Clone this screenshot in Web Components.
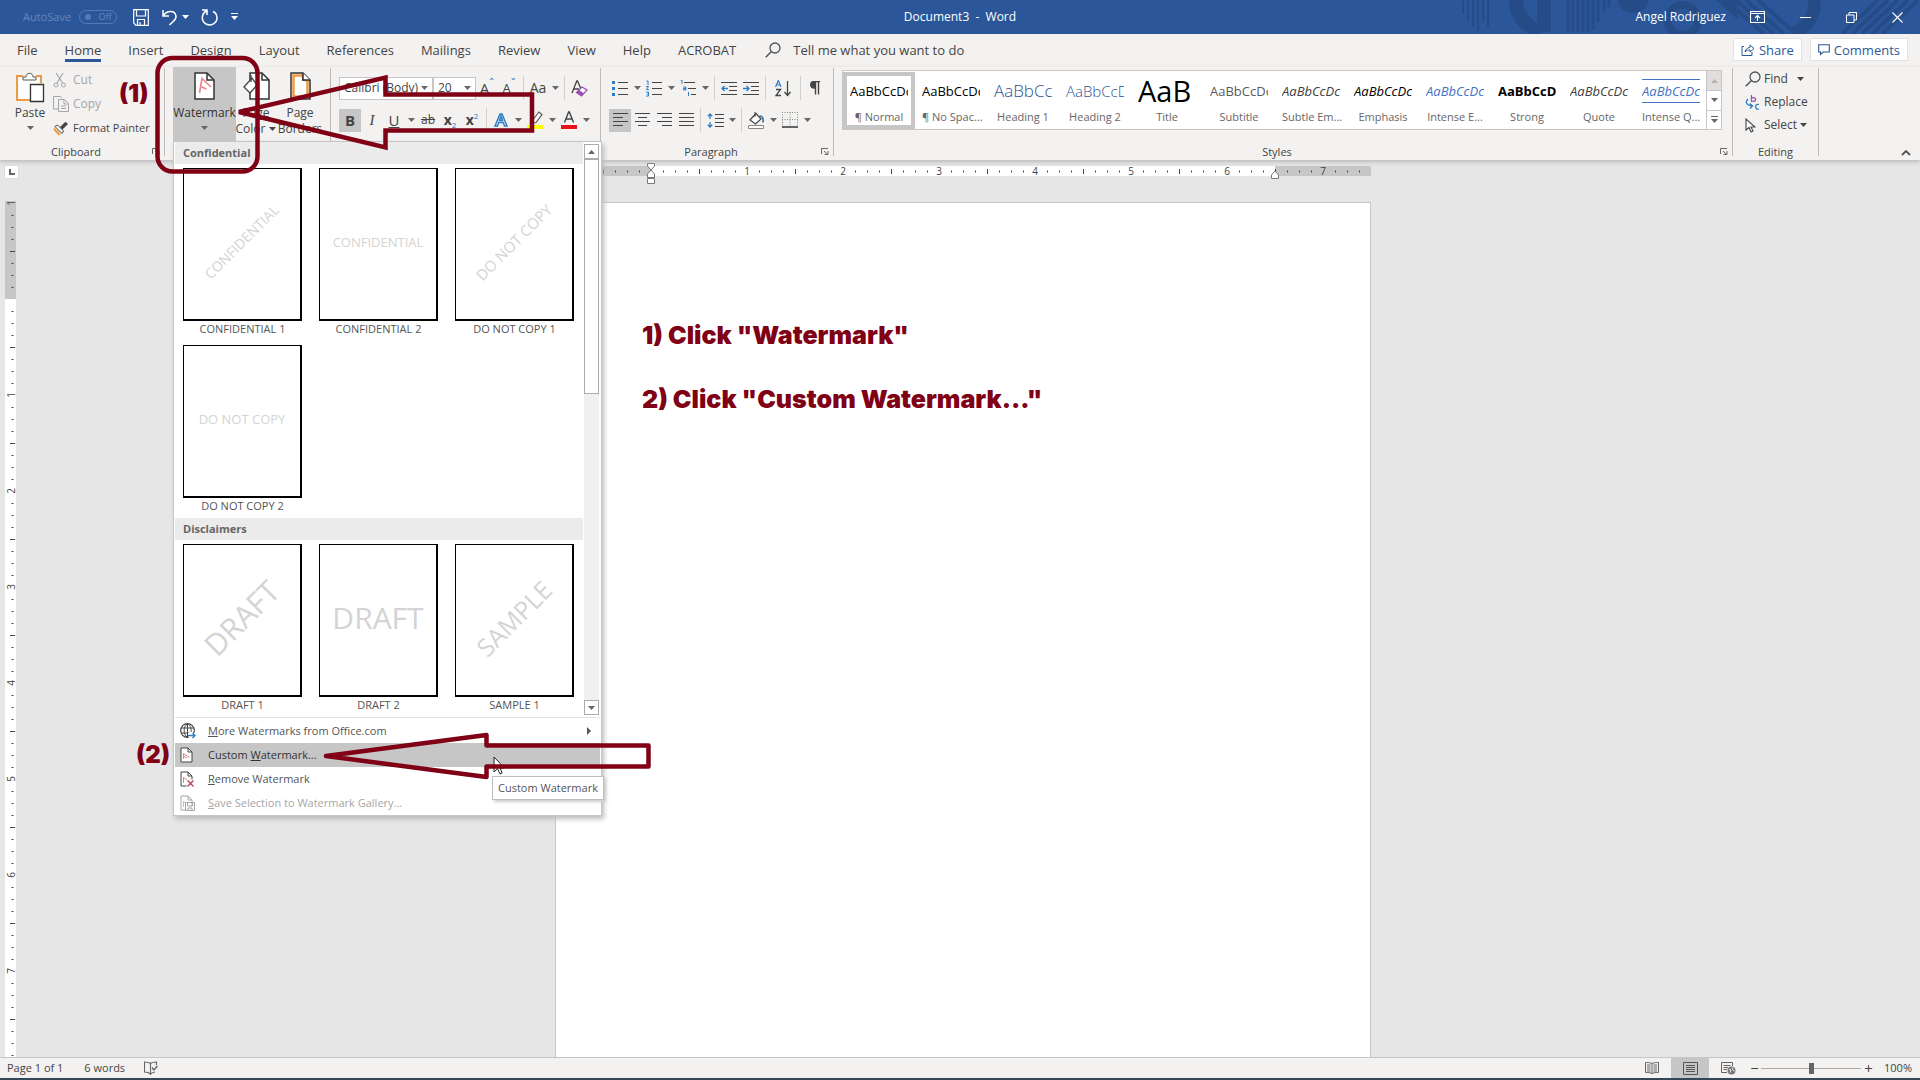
<!DOCTYPE html>
<html lang="en">
<head>
<meta charset="utf-8">
<title>Document3 - Word</title>
<style>
html,body{margin:0;height:100%}
body{font:12px/16px "Open Sans","Noto Sans",sans-serif;color:#444;overflow:hidden}
</style>
</head>
<body>
<word-app></word-app>
<script>
const BASE = `
*{box-sizing:border-box}
button,input,select{font:inherit;color:inherit;margin:0}
button{background:none;border:0;padding:0;display:flex;align-items:center;justify-content:center;white-space:nowrap}
svg{display:block}
`;
function define(name, html, setup) {
  const tpl = document.createElement('template');
  customElements.define(name, class extends HTMLElement {
    connectedCallback() {
      if (this.shadowRoot) return;
      const root = this.attachShadow({ mode: 'open' });
      tpl.innerHTML = `<style>${BASE}</style>` + (typeof html === 'function' ? html(this) : html);
      root.append(tpl.content.cloneNode(true));
      if (setup) setup(this, root);
    }
  });
}

/* ---------- icons: name -> [width, height, body] ---------- */
const L = (y, a, b, c = '#444') => `<path d="M${a} ${y}H${b}" stroke="${c}" fill="none"/>`;
const page = '<path d="M1 1H13L20 8V27H1Z" fill="#fff" stroke="#333" stroke-width="1.5"/><path d="M13 1V8H20" fill="none" stroke="#333" stroke-width="1.5"/>';
const small = c => `<path d="M1 1H8L12 5V15H1Z" fill="#fff" stroke="${c}"/><path d="M8 1V5H12" fill="none" stroke="${c}"/>`;
const ICONS = {
  caret: [7, 4, '<path d="M0 0H7L3.5 4Z" fill="currentColor"/>'],
  up: [7, 4, '<path d="M0 4H7L3.5 0Z" fill="currentColor"/>'],
  right: [4, 8, '<path d="M0 0V8L4 4Z" fill="currentColor"/>'],
  more: [7, 8, '<path d="M0 .5H7" stroke="currentColor"/><path d="M0 3H7L3.5 7Z" fill="currentColor"/>'],
  save: [16, 17, '<path d="M.7 .7H15.3V16.3H3L.7 14Z M3.5 1V7H12.5V1 M4.5 16V10.500H11.5V16 M7 16V13" fill="none" stroke="#fff" stroke-width="1.2"/>'],
  undo: [16, 17, '<path d="M1 1V7H7 M1.500 6.500C5 1 13 1 14 7C14.500 11 10 13 7.500 16" fill="none" stroke="#fff" stroke-width="1.5"/>'],
  redo: [17, 17, '<path d="M1 1H6V6 M5.500 2C0 5 0 12 5 15C10 17.500 16 14 16 9C16 6 14.500 3.500 12 2.500" fill="none" stroke="#fff" stroke-width="1.5"/>'],
  display: [15, 12, '<path d="M.5 .5H14.500V11.500H.5Z M.5 2.500H14.500 M7.500 10V4.500 M5 7L7.500 4.500L10 7" fill="none" stroke="#fff" stroke-width="1.1"/>'],
  min: [11, 11, '<path d="M0 5.500H11" stroke="#fff"/>'],
  restore: [11, 11, '<path d="M.5 3H8V10.500H.5Z M3 3V.5H10.500V8H8" fill="none" stroke="#fff"/>'],
  close: [11, 11, '<path d="M.5 .5L10.500 10.500M10.500 .5L.5 10.500" stroke="#fff" stroke-width="1.1"/>'],
  search: [16, 16, '<circle cx="10" cy="6" r="5" fill="none" stroke="#555" stroke-width="1.3"/><path d="M6.500 9.500L.7 15.300" stroke="#555" stroke-width="1.5"/>'],
  share: [14, 13, '<path d="M3 3.500H1V12.500H11V9" fill="none" stroke="#2b579a"/><path d="M4 9C4.500 6 6.500 4.700 9 4.500V2L13 5.500L9 9V7C7 7 5.500 7.500 4 9Z" fill="none" stroke="#2b579a"/>'],
  comment: [12, 12, '<path d="M.7 .7H11.300V8H5L2.500 10.500V8H.7Z" fill="none" stroke="#2b579a" stroke-width="1.1"/>'],
  paste: [29, 31, '<path d="M7 4H1V28H14 M20 4H25V11" fill="none" stroke="#eb9b48" stroke-width="2"/><path d="M2.500 6V26.500H13V12H23V6Z" fill="#fff"/><path d="M7 8V5H10C10 0 17 0 17 5H20V8Z" fill="#fff" stroke="#555"/><path d="M14.500 12.500H27.500V29.500H14.500Z" fill="#fff" stroke="#333" stroke-width="1.3"/>'],
  cut: [14, 16, '<path d="M3 1L9.500 11M10 1L4 11" stroke="#a6a6a6" fill="none" stroke-width="1.2"/><circle cx="3" cy="13" r="2" fill="none" stroke="#a6a6a6"/><circle cx="10.500" cy="13" r="2" fill="none" stroke="#a6a6a6"/>'],
  copy: [16, 16, '<path d="M5 13H.5V.5H7.500L9 2" fill="none" stroke="#a6a6a6"/><path d="M5.500 3.500H11.500L15.500 7.500V15.500H5.500Z M11 4V8H15 M8 10H13M8 12.500H13" fill="none" stroke="#a6a6a6"/>'],
  painter: [16, 15, '<path d="M1 6L8 13L5.500 14.500L.5 9Z" fill="#f0a04b"/><path d="M2 5.500L4.500 4L10.500 10L9 12.500Z" fill="#fff" stroke="#444"/><path d="M7 6L12.500 .8L15 3L9.500 8.500Z" fill="#444"/>'],
  watermark: [21, 28, page + '<path d="M5.500 22L8 7.500L17 16M6.500 15.500L12.500 18" transform="translate(0 -1)" fill="none" stroke="#f0868e" stroke-width="1.7"/>'],
  pagecolor: [27, 28, '<g transform="translate(6)">' + page + '</g><path d="M1 15L9 6L14 13L7 21Z" fill="#fff" stroke="#444" stroke-width="1.3"/><path d="M8 3V10M13 14C16 15 16 18 15 20" fill="none" stroke="#444" stroke-width="1.300"/>'],
  pageborders: [21, 28, page + '<path d="M3.500 3.500H11.500L17.500 9.500V24.500H3.500Z" fill="none" stroke="#eb9b48" stroke-width="2.500"/><path d="M13 1V8H20" fill="#fff" stroke="#333" stroke-width="1.500"/>'],
  clear: [17, 17, '<path d="M1 13L5.800 1H6.500L10 9M3 9H8" fill="none" stroke="#444" stroke-width="1.300"/><path d="M5.500 12.500L11 7L16 10L10.500 16Z" fill="#fff" stroke="#9b4fb5" stroke-width="1.300"/><path d="M5.500 12.500L8 10L13 13.500L10.500 16Z" fill="#9b4fb5"/>'],
  texteffect: [14, 14, '<path d="M1 13L6 1H8L13 13H10.500L9.300 9.500H4.700L3.500 13Z M5.500 7.500H8.500L7 3.300Z" fill="#fff" stroke="#2e7cc4" stroke-width="1.500"/>'],
  highlight: [16, 18, '<path d="M0 14H16V18H0Z" fill="#ffff00"/><path d="M5 10L12 1L15 3.500L9 11.500L5 12Z" fill="#fff" stroke="#555" stroke-width="1.200"/><path d="M2 12.500L5 10L7 12Z" fill="#666"/>'],
  fontcolor: [16, 18, '<path d="M0 14H16V18H0Z" fill="#e8121b"/><path d="M3.500 11.500L7.600 1H8.400L12.500 11.500M5 8H11" fill="none" stroke="#444" stroke-width="1.400"/>'],
  bullets: [16, 17, '<path d="M0 1H3V4H0ZM0 7H3V10H0ZM0 13H3V16H0Z" fill="#2e7cc4"/>' + L(2.5, 6, 16) + L(8.5, 6, 16) + L(14.5, 6, 16)],
  numbering: [16, 17, '<path d="M.5 1H2V5M0 6.500H2.500L.5 9.500H3M0 12H2.500V16H0M1 14H2.500" fill="none" stroke="#2e7cc4"/>' + L(2.5, 6, 16) + L(8.5, 6, 16) + L(14.5, 6, 16)],
  multi: [16, 17, '<path d="M.5 0H2V4M3 7H6V10H3.500V8.500H6M8.500 12V16" fill="none" stroke="#2e7cc4"/>' + L(2.5, 4, 15) + L(8.5, 8, 16) + L(14.5, 11, 16)],
  outdent: [16, 15, L(1.5, 0, 16) + L(5.5, 8, 16) + L(9.5, 8, 16) + L(13.5, 0, 16) + '<path d="M7 7.500H1M3.500 5L1 7.500L3.500 10" fill="none" stroke="#2e7cc4" stroke-width="1.300"/>'],
  indent: [16, 15, L(1.5, 0, 16) + L(5.5, 8, 16) + L(9.5, 8, 16) + L(13.5, 0, 16) + '<path d="M0 7.500H6M3.500 5L6 7.500L3.500 10" fill="none" stroke="#2e7cc4" stroke-width="1.300"/>'],
  sort: [17, 17, '<path d="M.5 7L3.300 .5L6 7M1.500 5H5" fill="none" stroke="#2e7cc4" stroke-width="1.200"/><path d="M1 9.500H5.500L1 15.500H6M12.500 1V15M9.500 12L12.500 15.500L15.500 12" fill="none" stroke="#444" stroke-width="1.300"/>'],
  pilcrow: [10, 14, '<path d="M10 .5H4.500C-.5 .5 -.5 7 4.500 7V1M5.500 .5V13.500M8.500 .5V13.500" fill="none" stroke="#444" stroke-width="1.400"/><path d="M5 .5C-.5 .5 -.5 7 5 7Z" fill="#444"/>'],
  left: [15, 14, L(.5, 0, 15) + L(4.5, 0, 10) + L(8.5, 0, 15) + L(12.5, 0, 10)],
  center: [15, 14, L(.5, 0, 15) + L(4.5, 3, 12) + L(8.5, 0, 15) + L(12.5, 3, 12)],
  rightal: [15, 14, L(.5, 0, 15) + L(4.5, 5, 15) + L(8.5, 0, 15) + L(12.5, 5, 15)],
  justify: [15, 14, L(.5, 0, 15) + L(4.5, 0, 15) + L(8.5, 0, 15) + L(12.5, 0, 15)],
  spacing: [17, 15, '<path d="M3 1V6M.8 3.300L3 1L5.200 3.300M3 9V14M.8 11.700L3 14L5.200 11.700" fill="none" stroke="#2e7cc4" stroke-width="1.300"/>' + L(1.5, 8, 17) + L(5.5, 8, 17) + L(9.5, 8, 17) + L(13.5, 8, 17)],
  shading: [17, 17, '<path d="M.5 13.500H15.500V16.500H.5Z" fill="#fff" stroke="#888"/><path d="M2 8L8 1.500L13 7L7.500 12Z" fill="#fff" stroke="#444" stroke-width="1.200"/><path d="M7 0V5" stroke="#444"/><path d="M11.500 4C15 4 15.500 7 15 10.500" fill="none" stroke="#2e6aa0" stroke-width="1.600"/>'],
  borders: [16, 16, '<path d="M.5 0V14M15.500 0V14M8 0V14M0 .5H16M0 7.500H16" fill="none" stroke="#888" stroke-dasharray="1 1.500"/><path d="M0 15H16" stroke="#333" stroke-width="1.500"/>'],
  launcher: [8, 7, '<path d="M.5 6V.5H7 M3 3L6.500 6.300M7 3V6.500H3.500" fill="none" stroke="#666"/>'],
  replace: [15, 17, '<path d="M6.500 1V8M6.500 4C12 2 12 9 6.500 7" fill="none" stroke="#9b4fb5" stroke-width="1.300"/><path d="M14 10.500C9.500 9 9.500 16.500 14 15M3 5C0 8 1 11 7 12M5 9.500L7.500 12L5 14.500" fill="none" stroke="#2e7cc4" stroke-width="1.300"/>'],
  select: [11, 15, '<path d="M1 1V12L4 9.500L6 14L8 13L6 9H10Z" fill="#fff" stroke="#444" stroke-width="1.100"/>'],
  collapse: [10, 6, '<path d="M1 5L5 1L9 5" fill="none" stroke="#555" stroke-width="1.800"/>'],
  globe: [16, 16, '<circle cx="7.500" cy="7.500" r="6.800" fill="none" stroke="#444" stroke-width="1.200"/><path d="M7.500 .7V14M1 5H14M1 10H9M7.500 .7C3 4 3 11 7.500 14.500M7.500 .7C11 3 11.500 6 11 9" fill="none" stroke="#444"/><path d="M8 10H16V16H9Z" fill="#fff"/><path d="M8 12.500H15M12.500 10L15 12.500L12.500 15" fill="none" stroke="#2e7cc4" stroke-width="1.300"/>'],
  custom: [13, 16, small('#444') + '<path d="M3.500 12V6.500L9.500 10.500M4 9.500L7 11" fill="none" stroke="#e8808a"/>'],
  remove: [15, 16, small('#444') + '<path d="M3.500 12V6.500L7 9" fill="none" stroke="#e8808a"/><path d="M6.500 8.500H15V16H6.500Z" fill="#fff"/><path d="M7.500 9.500L13.500 15.500M13.500 9.500L7.500 15.500" stroke="#b5404c" stroke-width="1.300"/>'],
  savesel: [15, 16, small('#a6a6a6') + '<path d="M3.500 12V6.500L7 9" fill="none" stroke="#bbb"/><path d="M5.500 7.500H14.500V15.500H5.500Z M7.500 8V11H12.500V8M8 15V13H12V15" fill="#fff" stroke="#a6a6a6"/>'],
  proof: [14, 14, '<path d="M6.500 2.500C5 1 2 1 .5 1V11C3 11 5 11.500 6.500 13M6.500 2.500C8 1 10 1 12.500 1V4M6.500 2.500V13C7.500 12 9 11.500 11 11" fill="none" stroke="#666" stroke-width="1.100"/><path d="M8 6.500L10 9L13.500 5" fill="none" stroke="#666" stroke-width="1.400"/>'],
  read: [14, 12, '<path d="M7 1.500C5 .5 2 .5 .5 .5V10.500C3 10.500 5 10.500 7 11.500C9 10.500 11 10.500 13.500 10.500V.5C11 .5 9 .5 7 1.500ZM7 1V12M2 3H5.500M2 5H5.500M2 7H5.500M2 9H5.500M8.500 3H12M8.500 5H12M8.500 7H12M8.500 9H12" fill="none" stroke="#666"/>'],
  print: [15, 13, '<path d="M.5 .5H14.500V12.500H.5ZM3 3.500H12M3 5.500H12M3 7.500H12M3 9.500H12" fill="none" stroke="#555"/>'],
  web: [15, 13, '<path d="M6 10.500H.5V.5H11.500V4M2.500 3.500H9.500M2.500 5.500H7M2.500 7.500H6" fill="none" stroke="#666"/><circle cx="10.500" cy="8.500" r="4" fill="#777"/><path d="M8 7L10 8L9 10.500M12 5.500L11.500 7.500L13.500 9" fill="none" stroke="#f3f2f1"/>'],
  cursor: [12, 19, '<path d="M1 1V16L4.500 12.700L7 18L9.200 17L7 12H11.500Z" fill="#fff" stroke="#222"/>']
};
define('ui-icon', el => {
  const [w, h, body] = ICONS[el.getAttribute('name')];
  return `<style>:host{display:block;flex:none}</style><svg width="${w}" height="${h}" viewBox="0 0 ${w} ${h}" aria-hidden="true">${body}</svg>`;
});

/* ---------- title bar ---------- */
define('title-bar', `
<style>
:host{display:grid;grid-template-columns:1fr auto 1fr;align-items:center;height:34px;background:#2b579a;color:#fff;position:relative;flex:none}
.art{position:absolute;right:0;top:0}
.l,.r,.win{display:flex;align-items:center;position:relative}
.l{padding-left:23px}
.r{justify-content:flex-end;padding-right:17px;gap:24px}
.win{gap:35px}
.auto{display:flex;gap:8px;color:#6386bd;align-items:center;margin-right:15px;font-size:11px;width:95px}
.tog{width:38px;height:14px;border:1px solid #5479b4;border-radius:7px;display:flex;align-items:center;gap:8px;padding:0 4px;font-size:9px;color:#6386bd}
.tog i{width:6px;height:6px;border-radius:3px;background:#5479b4}
.l>button{margin-right:13px}
.l .c{margin:0 12px 0 -9px}
</style>
<svg class="art" width="462" height="34" viewBox="0 0 462 34" aria-hidden="true"><g fill="none" stroke="#264c88">
<path d="M5 0V14M10 0V20M15 0V26M20 0V32M25 0V22M30 0V28" stroke-width="2"/>
<path d="M58 0C58 16 66 24 84 34" stroke-width="14"/><path d="M86 0V32" stroke-width="14"/>
<path d="M110 0V32M115 0V32M120 0V32M125 0V32M130 0V32M135 0V30M140 0V22M146 0V12M151 0V7" stroke-width="3"/>
<circle cx="225" cy="20" r="15" stroke-width="8"/>
<path d="M268 0L306 34M278 0L316 34M288 0L326 34M300 0L338 34" stroke-width="4"/>
<path d="M356 0C358 14 350 26 336 34" stroke-width="13"/>
<path d="M384 34L420 0M394 34L430 0M404 34L440 0M414 34L450 0M424 34L460 0" stroke-width="4"/></g>
<path d="M160 0H190C190 17 160 17 160 0ZM258 0H280V20Z" fill="#264c88"/></svg>
<div class="l"><label class="auto">AutoSave <button class="tog" disabled><i></i>Off</button></label>
<button aria-label="Save"><ui-icon name="save"></ui-icon></button><button aria-label="Undo"><ui-icon name="undo"></ui-icon></button><button class="c" aria-label="Undo list"><ui-icon name="caret"></ui-icon></button><button aria-label="Redo"><ui-icon name="redo"></ui-icon></button><button aria-label="Customize"><ui-icon name="more"></ui-icon></button></div>
<span>Document3&nbsp; -&nbsp; Word</span>
<div class="r"><span>Angel Rodriguez</span><div class="win"><button aria-label="Ribbon display"><ui-icon name="display"></ui-icon></button><button aria-label="Minimize"><ui-icon name="min"></ui-icon></button><button aria-label="Restore"><ui-icon name="restore"></ui-icon></button><button aria-label="Close"><ui-icon name="close"></ui-icon></button></div></div>`);

/* ---------- tab row ---------- */
define('tab-row', `
<style>
:host{display:flex;height:33px;background:#f3f2f1;font-size:13px;padding:0 12px 0 17px;flex:none}
nav{display:flex;gap:27px}
nav button{height:28px;padding-top:6px;border-bottom:3px solid transparent;color:#444}
nav .on{border-color:#2b579a}
.tell{display:flex;gap:12px;align-items:center;height:31px;margin:0 auto 0 29px}
.act{height:23px;background:#fff;border:1px solid #e5e3e1;color:#2b579a;padding:0 7px;gap:4px;margin:4px 0 0 8px}
</style>
<nav>${['File', 'Home', 'Insert', 'Design', 'Layout', 'References', 'Mailings', 'Review', 'View', 'Help', 'ACROBAT'].map(t => `<button${t === 'Home' ? ' class="on"' : ''}>${t}</button>`).join('')}</nav>
<button class="tell"><ui-icon name="search"></ui-icon>Tell me what you want to do</button>
<button class="act"><ui-icon name="share"></ui-icon>Share</button><button class="act"><ui-icon name="comment"></ui-icon>Comments</button>`);

/* ---------- ribbon ---------- */
define('ribbon-group', el => `
<style>
:host{display:flex;flex:none}
.col{flex:1;display:flex;flex-direction:column;min-width:0}
.body{flex:1;display:flex;min-width:0}
.foot{height:17px;display:flex;align-items:center;font-size:11px}
.foot span{flex:1;text-align:center}
.foot button{margin-right:4px}
.rule{width:1px;background:#bdbbb9;margin:1px 0 4px}
</style>
<div class="col"><div class="body"><slot></slot></div><div class="foot"><span>${el.getAttribute('label') || ''}</span>${el.hasAttribute('launch') ? '<button aria-label="More options"><ui-icon name="launcher"></ui-icon></button>' : ''}</div></div><div class="rule"></div>`);

define('style-card', el => `
<style>
:host{display:block;width:72px;flex:none}
button{width:72px;height:57px;display:block;border:4px solid ${el.hasAttribute('on') ? '#c6c6c6' : 'transparent'};padding:1px 3px 0;text-align:center;color:#666;font-size:11px}
.s{display:flex;align-items:center;height:29px;overflow:hidden;color:#000;font:13px/22px "Open Sans",sans-serif;margin-bottom:3px}
.s span{flex:none;${el.getAttribute('look') || ''}}
</style>
<button><span class="s"><span>${el.getAttribute('sample') || 'AaBbCcDc'}</span></span>${el.getAttribute('name')}</button>`);

const T = (icon, cls = '', name = icon) => `<button class="t ${cls}" aria-label="${name}"><ui-icon name="${icon}"></ui-icon></button>`;
const C = '<button class="c" aria-label="Options"><ui-icon name="caret"></ui-icon></button>';
const D = '<i class="d"></i>';
define('word-ribbon', `
<style>
:host{display:flex;height:93px;background:#f3f2f1;flex:none;box-shadow:0 2px 4px #bbb;position:relative}
.big{flex-direction:column;justify-content:flex-start;padding-top:5px;line-height:16px;font-size:12px}
.big>ui-icon:first-child{height:28px;margin-bottom:5px}
.big .k{margin-top:5px;color:#666}
.in{display:flex;align-items:center;gap:4px}
.wm{width:63px;background:#c6c6c6;color:#333}
.clip{flex-direction:column;display:flex;align-items:flex-start;justify-content:space-between;padding:5px 0 7px;margin-left:6px}
.clip button{gap:4px;font-size:11px;height:16px}
.clip ui-icon{width:16px}
.clip .off{color:#a6a6a6;font-size:12px}
.rows{display:flex;flex-direction:column;padding:9px 0 0 8px;gap:8px}
.row{display:flex;height:24px;align-items:center}
.t{width:22px;height:23px;font-size:15px}
.w{width:28px}
.c{width:12px;height:23px;color:#666}
.on{background:#c6c6c6}
.d{width:1px;height:24px;margin:0 3px;background:#d2d0ce}
.combo{display:grid;height:23px;align-items:center}
.combo>*{grid-area:1/1}
.combo ui-icon{justify-self:end;margin-right:5px;color:#666;pointer-events:none}
select{appearance:none;width:100%;height:100%;background:#fff;border:1px solid #c8c6c4;border-radius:0;padding:0 4px;font-size:12px}
sup,sub{font-size:8px;color:#2e7cc4;line-height:8px}
sup{align-self:flex-start;margin-top:3px}
sub{align-self:flex-end;margin-bottom:3px}
.k2{font-size:12px}
.gal{flex:1;display:flex;background:#fff;border:1px solid #c8c6c4;margin:3px 10px 13px 8px;min-width:0}
.cards{flex:1;display:flex;align-items:center;overflow:hidden;min-width:0}
.gs{display:grid;grid-template-rows:1fr 1fr 1fr;width:15px}
.gs button{border-left:1px solid #c8c6c4;border-top:1px solid #c8c6c4;color:#666}
.gs button:first-child{border-top:0;background:#e1dfdd;color:#b5b3b1}
.ed{display:flex;flex-direction:column;padding:4px 0 0 12px;gap:7px;font-size:12px}
.ed button{gap:3px;height:16px;justify-content:flex-start}
.ed ui-icon:first-child{width:16px}
.end{flex:none;width:101px;display:flex;align-items:flex-end;justify-content:flex-end;padding:0 9px 4px 0}
</style>
<ribbon-group label="Clipboard" launch style="width:165px">
 <button class="big" style="margin-left:13px;width:34px"><ui-icon name="paste"></ui-icon>Paste<ui-icon class="k" name="caret"></ui-icon></button>
 <div class="clip"><button class="off"><ui-icon name="cut"></ui-icon>Cut</button><button class="off"><ui-icon name="copy"></ui-icon>Copy</button><button><ui-icon name="painter"></ui-icon>Format Painter</button></div>
</ribbon-group>
<ribbon-group style="width:166px">
 <button class="big wm" style="margin-left:8px"><ui-icon name="watermark"></ui-icon>Watermark<ui-icon class="k" name="caret"></ui-icon></button>
 <button class="big" style="width:40px"><ui-icon name="pagecolor"></ui-icon>Page<span class="in">Color<ui-icon name="caret"></ui-icon></span></button>
 <button class="big" style="width:48px"><ui-icon name="pageborders"></ui-icon>Page<span>Borders</span></button>
</ribbon-group>
<ribbon-group style="width:270px"><div class="rows">
 <div class="row"><label class="combo" style="width:94px"><select aria-label="Font"><option>Calibri (Body)</option></select><ui-icon name="caret"></ui-icon></label><label class="combo" style="width:43px"><select aria-label="Font size"><option>20</option></select><ui-icon name="caret"></ui-icon></label>
 <button class="t">A<sup class="k2">ˆ</sup></button><button class="t" style="font-size:13px">A<sup class="k2">ˇ</sup></button>${D}<button class="t" style="font-size:14px">Aa</button>${C}${D}${T('clear')}</div>
 <div class="row"><button class="t on"><b>B</b></button><button class="t"><em style="font-family:'Liberation Serif',serif">I</em></button><button class="t"><u>U</u></button>${C}<button class="t" style="font-size:12px"><s>ab</s></button><button class="t" style="font-size:14px"><b>x</b><sub>2</sub></button><button class="t" style="font-size:14px"><b>x</b><sup>2</sup></button>${D}${T('texteffect')}${C}${T('highlight')}${C}${T('fontcolor')}${C}</div>
</div></ribbon-group>
<ribbon-group label="Paragraph" launch style="width:233px"><div class="rows">
 <div class="row">${T('bullets')}${C}${T('numbering')}${C}${T('multi')}${C}${D}${T('outdent')}${T('indent')}${D}${T('sort', 'w')}${D}${T('pilcrow')}</div>
 <div class="row">${T('left', 'on')}${T('center')}${T('rightal')}${T('justify')}${D}${T('spacing')}${C}${D}${T('shading')}${C}${T('borders')}${C}</div>
</div></ribbon-group>
<ribbon-group label="Styles" launch style="flex:1;min-width:0"><div class="gal"><div class="cards">
 <style-card name="¶ Normal" on></style-card><style-card name="¶ No Spac..."></style-card>
 <style-card name="Heading 1" look="font-size:17px;color:#2f5496;font-weight:300"></style-card>
 <style-card name="Heading 2" look="font-size:15px;color:#2f5496;font-weight:300"></style-card>
 <style-card name="Title" sample="AaB" look="font-size:29px"></style-card>
 <style-card name="Subtitle" look="color:#5a5a5a"></style-card>
 <style-card name="Subtle Em..." look="font-style:italic;color:#404040"></style-card>
 <style-card name="Emphasis" look="font-style:italic"></style-card>
 <style-card name="Intense E..." look="font-style:italic;color:#4472c4"></style-card>
 <style-card name="Strong" look="font-weight:bold"></style-card>
 <style-card name="Quote" look="font-style:italic;color:#404040"></style-card>
 <style-card name="Intense Q..." look="font-style:italic;color:#4472c4;border:solid #4472c4;border-width:1px 0"></style-card>
</div><div class="gs"><button aria-label="Up"><ui-icon name="up"></ui-icon></button><button aria-label="Down"><ui-icon name="caret"></ui-icon></button><button aria-label="More"><ui-icon name="more"></ui-icon></button></div></div></ribbon-group>
<ribbon-group label="Editing" style="width:86px"><div class="ed">
 <button><ui-icon name="search"></ui-icon>Find&nbsp;&nbsp;<ui-icon name="caret"></ui-icon></button><button><ui-icon name="replace"></ui-icon>Replace</button><button><ui-icon name="select"></ui-icon>Select<ui-icon name="caret"></ui-icon></button>
</div></ribbon-group>
<div class="end"><button aria-label="Collapse ribbon"><ui-icon name="collapse"></ui-icon></button></div>`);

/* ---------- rulers ---------- */
define('doc-ruler', el => {
  const vert = el.hasAttribute('vertical');
  const zero = vert ? 98 : 96, end = vert ? 860 : 816, white = vert ? 1200 : 624;
  let marks = '';
  for (let p = zero % 12; p < end; p += 12) {
    const n = (p - zero) / 96, eighth = Math.round((p - zero) / 12);
    if (eighth % 8 === 0) {
      if (n !== 0) marks += vert
        ? `<text transform="translate(15 ${p}) rotate(-90)">${Math.abs(n)}</text>`
        : `<text x="${p}" y="13">${Math.abs(n)}</text>`;
    } else {
      const k = eighth % 4 === 0 ? 5 : 2;
      marks += vert ? `<path d="M${12.5 - k / 2} ${p + .5}h${k}"/>` : `<path d="M${p + .5} ${9.5 - k / 2}v${k}"/>`;
    }
  }
  const css = '<style>:host{display:block}text{font-size:10px;text-anchor:middle;fill:#444}.m path{stroke:#444}</style>';
  return vert
    ? `${css}<svg width="16" height="${end}" viewBox="0 0 16 ${end}"><path d="M5 0H16V98H5Z" fill="#c6c6c6"/><path d="M5 98H16V${end}H5Z" fill="#fff"/><g class="m">${marks}</g></svg>`
    : `${css}<svg width="816" height="24" viewBox="0 0 816 24"><path d="M0 4H816V14H0Z" fill="#c6c6c6"/><path d="M96 4H${96 + white}V14H96Z" fill="#fff"/><g class="m">${marks}</g>
      <g fill="#fff" stroke="#777"><path d="M92.500 1.500H99.500V4L96 8L92.500 4ZM96 8L99.500 12V15.500H92.500V12ZM92.500 16.500H99.500V21.500H92.500Z"/><path d="M716.500 16.500H723.500V13L720 9L716.500 13Z"/></g></svg>`;
});

/* ---------- document area ---------- */
define('doc-area', `
<style>
:host{flex:1;min-height:0;display:grid;grid-template:41px 1fr/24px 1fr;background:#e6e6e6;overflow:hidden}
.tab{margin:5px 0 0 4px;width:15px;height:14px;background:#fff;border:1px solid #ddd;display:grid;place-items:center}
.tab i{width:6px;height:6px;border:solid #666;border-width:0 0 2px 2px}
.top,.main{display:flex;justify-content:center;padding-right:18px;min-height:0}
.top{padding-top:2px}
.v{overflow:hidden}
article{width:816px;background:#fff;border:1px solid #c6c6c6;border-bottom:0;margin-top:1px;padding:116px 86px;color:#800015}
p{margin:0 0 32px;font:900 25px/32px Inter,"Open Sans",sans-serif}
</style>
<div class="tab"><i></i></div><div class="top"><doc-ruler></doc-ruler></div>
<div class="v"><doc-ruler vertical></doc-ruler></div>
<div class="main"><article><p>1) Click "Watermark"</p><p>2) Click "Custom Watermark..."</p></article></div>`);

/* ---------- watermark menu ---------- */
define('watermark-thumb', el => `
<style>
:host{display:block;width:119px}
button{display:block;width:119px;height:173px;font-size:11px;line-height:16px;color:#555}
.p{display:grid;place-items:center;height:153px;padding-bottom:4px;border:1px solid #000;border-right-width:2px;border-bottom-width:2px;background:#fff;overflow:hidden}
.p span{font-size:${el.getAttribute('size')}px;line-height:1;color:#d4d4d4;${el.hasAttribute('diagonal') ? 'rotate:-45deg' : ''}}
.n{display:block;height:20px}
</style>
<button><span class="p"><span>${el.getAttribute('text')}</span></span><span class="n">${el.getAttribute('label')}</span></button>`);

define('menu-entry', el => `
<style>
:host{display:block}
button{width:100%;height:24px;justify-content:flex-start;font-size:11px;color:#555;padding:0 9px 0 5px;gap:12px}
ui-icon{width:16px}
span{flex:1;text-align:left}
.r{width:4px}
:host([on]) button{background:#c6c6c6;color:#333}
:host([off]) button{color:#a6a6a6}
</style>
<button><ui-icon name="${el.getAttribute('icon')}"></ui-icon><span><slot></slot></span>${el.hasAttribute('sub') ? '<ui-icon class="r" name="right"></ui-icon>' : ''}</button>`);

define('watermark-menu', `
<style>
:host{display:block;width:429px;background:#fff;border:1px solid #c6c6c6;box-shadow:2px 3px 5px #bbb}
.g{display:flex}
.list{flex:1}
h3{margin:0 0 4px 1px;height:22px;background:#ebebeb;font:bold 11px/22px "Open Sans",sans-serif;color:#666;padding-left:8px}
.grid{display:grid;grid-template-columns:119px 119px 119px;gap:4px 17px;padding-left:9px}
.sb{width:15px;margin:2px 2px 2px 1px;display:flex;flex-direction:column;background:#f0f0f0;color:#666}
.sb button{height:15px;border:1px solid #ababab;background:#fff}
.sb i{height:235px;border:1px solid #ababab;background:#fff;margin-bottom:auto}
.items{border-top:1px solid #e1e1e1;margin:0 1px;padding-top:1px}
</style>
<div class="g"><div class="list"><h3>Confidential</h3><div class="grid">
<watermark-thumb text="CONFIDENTIAL" size="14" diagonal label="CONFIDENTIAL 1"></watermark-thumb><watermark-thumb text="CONFIDENTIAL" size="13" label="CONFIDENTIAL 2"></watermark-thumb><watermark-thumb text="DO NOT COPY" size="15" diagonal label="DO NOT COPY 1"></watermark-thumb><watermark-thumb text="DO NOT COPY" size="13" label="DO NOT COPY 2"></watermark-thumb></div>
<h3>Disclaimers</h3><div class="grid"><watermark-thumb text="DRAFT" size="30" diagonal label="DRAFT 1"></watermark-thumb><watermark-thumb text="DRAFT" size="30" label="DRAFT 2"></watermark-thumb><watermark-thumb text="SAMPLE" size="25" diagonal label="SAMPLE 1"></watermark-thumb></div></div>
<div class="sb"><button aria-label="Scroll up"><ui-icon name="up"></ui-icon></button><i></i><button aria-label="Scroll down"><ui-icon name="caret"></ui-icon></button></div></div>
<div class="items"><menu-entry icon="globe" sub><u>M</u>ore Watermarks from Office.com</menu-entry><menu-entry icon="custom" on>Custom <u>W</u>atermark...</menu-entry><menu-entry icon="remove"><u>R</u>emove Watermark</menu-entry><menu-entry icon="savesel" off><u>S</u>ave Selection to Watermark Gallery...</menu-entry></div>`);

/* ---------- callouts drawn over the window ---------- */
define('callout-layer', `
<style>
:host{position:absolute;inset:0;pointer-events:none;color:#800015;font:900 24px/28px Inter,"Open Sans",sans-serif}
svg{position:absolute;left:0;top:0}
.a,.b,.tip,ui-icon{position:absolute}
.a{left:119px;top:80px}.b{left:136px;top:741px}
ui-icon{left:493px;top:756px}
.tip{left:492px;top:776px;height:24px;padding:0 5px;border:1px solid #bebebe;background:#fff;color:#555;font:11px/22px "Open Sans",sans-serif;box-shadow:2px 2px 3px #ccc}
</style>
<ui-icon name="cursor"></ui-icon>
<svg width="700" height="800" viewBox="0 0 700 800" aria-hidden="true"><g fill="none" stroke="#800015" stroke-width="4.500" stroke-linejoin="round">
<rect x="157.500" y="58" width="100" height="113.500" rx="15"/>
<path d="M239 112L385.500 77.500V94.500H532V130.500H385.500V147.500Z" stroke-linejoin="miter" stroke-miterlimit="2"/>
<path d="M326 756L486.500 735V745.500H648.500V766.500H486.500V777Z"/></g></svg>
<span class="a">(1)</span><span class="b">(2)</span><span class="tip" role="tooltip">Custom Watermark</span>`);

/* ---------- status bar ---------- */
define('status-bar', `
<style>
:host{display:flex;align-items:center;height:23px;background:#f3f2f1;border-top:1px solid #c6c6c6;border-bottom:2px solid #33475b;padding:0 8px 0 7px;flex:none;font-size:11px}
.w{margin:0 19px 0 21px}
.v{width:38px;height:20px}
.on{background:#c6c6c6}
.z{margin-left:3px;font-size:15px;width:9px}
.p{margin:0 11px 0 3px}
input{appearance:none;width:100px;height:14px;background:linear-gradient(#aaa,#aaa) center/100% 1px no-repeat;margin-left:2px}
input::-webkit-slider-thumb{appearance:none;width:5px;height:11px;background:#666}
</style>
<span>Page 1 of 1</span><span class="w">6 words</span><button aria-label="Proofing"><ui-icon name="proof"></ui-icon></button>
<span style="flex:1"></span>
<button class="v" aria-label="Read mode"><ui-icon name="read"></ui-icon></button><button class="v on" aria-label="Print layout"><ui-icon name="print"></ui-icon></button><button class="v" aria-label="Web layout"><ui-icon name="web"></ui-icon></button>
<button class="z">−</button><input type="range" aria-label="Zoom" value="50"><button class="z p">+</button><span>100%</span>`);

define('word-app', `
<style>
:host{display:flex;flex-direction:column;height:100vh;position:relative;background:#e6e6e6}
watermark-menu{position:absolute;left:173px;top:141px}
</style>
<title-bar></title-bar><tab-row></tab-row><word-ribbon></word-ribbon><doc-area></doc-area><status-bar></status-bar>
<watermark-menu></watermark-menu><callout-layer></callout-layer>`);
</script>
</body>
</html>
